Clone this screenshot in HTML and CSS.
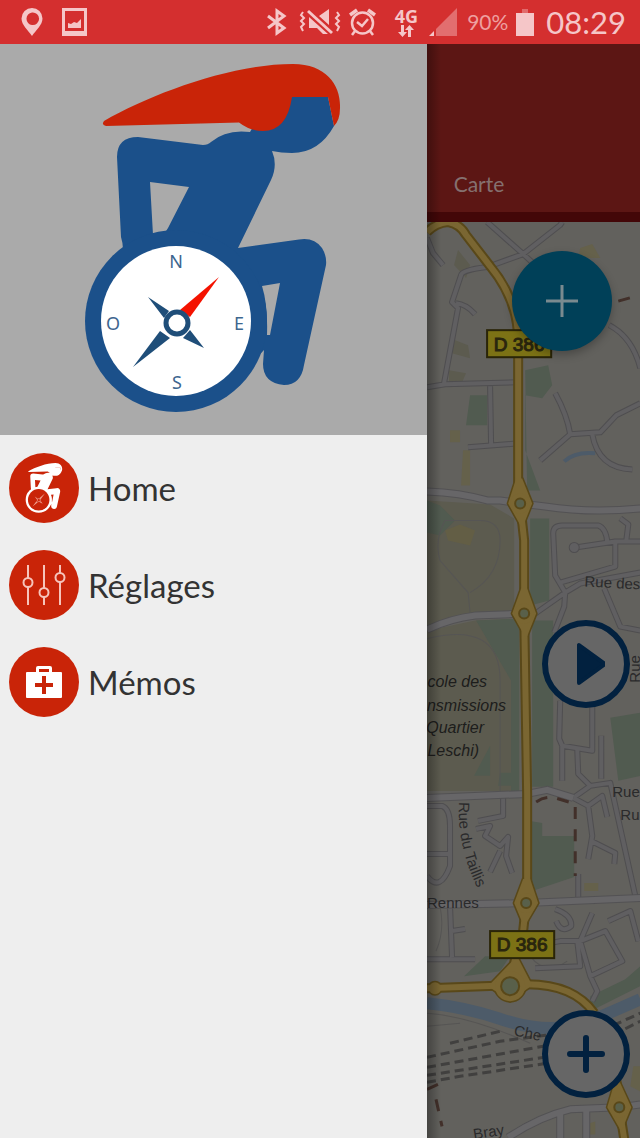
FILE: index.html
```html
<!DOCTYPE html>
<html lang="fr">
<head>
<meta charset="utf-8">
<meta name="viewport" content="width=device-width, initial-scale=1">
<title>Carte</title>
<link rel="stylesheet" href="styles.css">
</head>
<body>
<svg class="sprite" aria-hidden="true">
  <symbol id="figure" viewBox="84 64 256 349">
    <path class="fig-body" fill-rule="evenodd" d="M291 97H327L333 126Q318 153 291 153Q280 153 271 151Q277 165 270 180L237 248L298 239.500Q313 237 321 248Q326 256 325 265L303 365Q300 385 283 385Q262 383 262 364L263 350L240 375L120 260Q124 250 120 237L116 157Q116 137 137 137L202 145Q207 145 210 142Q225 129 249 132L262 110ZM149 182L152 235L162 233Q166 231 167 228L188 187ZM261 286L279 283L269 335H266Q267 305 261 286Z"/>
    <circle class="fig-body" cx="175" cy="321" r="91"/>
    <path class="fig-hat" d="M103 121C150 94 230 64 292 64C326 64 340 86 339 108Q339 120 333 126L327 97H291Q286 131 262 131Q249 131 238 122.500L105 126Q100 125 103 121Z"/>
    <circle class="fig-dial" cx="175" cy="321" r="75"/>
    <path class="fig-north" d="M218 277L189 317L179 310Z"/>
    <path class="fig-mark" d="M147 297L168 311L163 318ZM132 367L159 331L169 338ZM203 348L182 338L189 330Z"/>
    <circle class="fig-hub" cx="176" cy="323" r="11"/>
  </symbol>
</svg>

<header class="status">
  <div class="status-side">
    <svg class="icon-pin" viewBox="0 0 22 28"><path fill="currentColor" fill-rule="evenodd" d="M11 0A10.500 10.500 0 0 0 .5 10.500C.5 17 7 22 11 28C15 22 21.500 17 21.500 10.500A10.500 10.500 0 0 0 11 0ZM11 4.500A6.300 6.300 0 1 1 11 17A6.300 6.300 0 0 1 11 4.500Z"/></svg>
    <svg class="icon-image" viewBox="0 0 25 28"><path fill="currentColor" fill-rule="evenodd" d="M0 0H25V28H0ZM3 3V23H22V3Z"/><path fill="currentColor" d="M6 20V15L9 16L12 14L15 15L19 11V20Z"/></svg>
  </div>
  <div class="status-side status-system">
    <svg class="icon-bt" viewBox="0 0 20 28"><path fill="none" stroke="currentColor" stroke-width="3" d="M1 8L17 20L10 25V3L17 8L1 20"/></svg>
    <svg class="icon-mute" viewBox="0 0 42 28"><g fill="none" stroke="currentColor"><path stroke-width="2" d="M4 4L2 7L5 10L2 13L5 16L2 19L4 23M38 4L40 7L37 10L40 13L37 16L40 19L38 23"/><path stroke-width="3" d="M9 3L33 25"/></g><path fill="currentColor" d="M10 9L29 26H24L18 20H10ZM20 8L30 1V17Z"/></svg>
    <svg class="icon-alarm" viewBox="0 0 27 28"><g fill="none" stroke="currentColor" stroke-width="2.500"><circle cx="13.500" cy="15" r="10.500"/><path d="M8 14L13 18L19 11M6 23L3 27M21 23L24 27"/><path stroke-width="3.500" d="M1 7L8 2M26 7L19 2"/></g></svg>
    <div class="network"><span>4G</span>
      <svg class="icon-data" viewBox="0 0 16 12"><path fill="currentColor" d="M3 0H6V7H9L4.500 12L0 7H3ZM10 12H13V5H16L11.500 0L7 5H10Z"/></svg>
    </div>
    <svg class="icon-signal" viewBox="0 0 28 28"><path fill="currentColor" opacity=".42" d="M28 0V28H7V21Z"/><path fill="currentColor" d="M0 28L5 23V28Z"/></svg>
    <span class="battery-level">90%</span>
    <svg class="icon-battery" viewBox="0 0 18 27"><path fill="currentColor" d="M0 4H18V27H0Z"/><path fill="currentColor" opacity=".4" d="M6 0H12V4H6Z"/></svg>
    <time class="clock">08:29</time>
  </div>
</header>

<div class="screen">
  <aside class="drawer">
    <div class="hero">
      <svg class="hero-logo" viewBox="84 64 256 349" role="img" aria-label="Logo boussole">
        <use href="#figure" x="84" y="64" width="256" height="349"/>
        <g class="compass-text"><text x="175" y="268">N</text><text x="112" y="330">O</text><text x="238" y="330">E</text><text x="176" y="389">S</text></g>
      </svg>
    </div>
    <nav class="menu">
      <a class="menu-item" href="#home"><span class="badge"><svg class="badge-figure"><use href="#figure"/></svg></span>Home</a>
      <a class="menu-item" href="#reglages"><span class="badge"><svg class="badge-sliders" viewBox="0 0 44 42"><g fill="none" stroke="currentColor" stroke-width="2"><path d="M6 1V14M6 23V41M22 1V24M22 33V41M38 1V9M38 18V41"/><circle cx="6" cy="18.500" r="4.500"/><circle cx="22" cy="28.500" r="4.500"/><circle cx="38" cy="13.500" r="4.500"/></g></svg></span>Réglages</a>
      <a class="menu-item" href="#memos"><span class="badge"><svg class="badge-kit" viewBox="0 0 36 32"><path fill="currentColor" fill-rule="evenodd" d="M1 6H10V2Q10 0 12 0H24Q26 0 26 2V6H35Q36 6 36 7V31Q36 32 35 32H1Q0 32 0 31V7Q0 6 1 6ZM13 3V6H23V3ZM16 10V17H9V21H16V28H20V21H27V17H20V10Z"/></svg></span>Mémos</a>
    </nav>
  </aside>

  <main class="pane">
    <div class="toolbar"><a class="tab" href="#carte">Carte</a></div>
    <svg class="map" viewBox="427 222 213 916" preserveAspectRatio="xMinYMin slice" role="img" aria-label="Plan du quartier">
      <defs>
        <path id="lanes" d="M427 238L433 253L443 265M487 222L523 254L560 225L562 222M535 265L523 254L487 267Q462 270 461 275L452 302L458 308L444 383M456 303Q466 304 475 314M427 387L445 384L518 382M609 325Q632 337 640 368M555 393Q567 415 570 434M640 403L616 415L600 432L570 434L540 460M592 434Q598 468 632 469M490 386L491 445M468 447L518 443M565 592L555 575L553 533Q553 525 562 525H598Q606 528 607 542M575 547L615 541H640M615 541V566L560 582M565 592L580 583L640 572M535 613L565 592L564 606L554 632M604 588L620 626L640 630M620 518L628 524L626 540M560 700L559 738L562 745V780M562 745L592 750V700M577 748L578 773L590 785M601 735V778M573 797L590 785L610 782L635 895M573 797L588 805L602 795L607 816M588 805L592 835L588 858M591 840L615 852L614 863M427 805H442Q450 808 450 825V865Q440 892 427 875M427 853H450M503 797V815L478 820M476 828L490 825L485 835L500 845L508 836L506 855L512 872M500 850L490 871M578 873V897M450 905L452 956M427 958H475M452 930L465 928M533 945L560 940H580L592 912M535 967L580 965L577 940M580 940L605 930L622 960L590 975L580 940M555 908Q572 914 571 925Q561 933 556 920M590 975L597 990L592 1000M608 920L630 910L638 940"/>
        <path id="streets" d="M427 491Q460 492 487 500H500L520 503L545 506Q590 513 640 508M427 629Q450 618 475 615L524 613M427 797L527 793L547 789L573 797M427 904L526 902L640 897M508 1136Q540 1115 570 1108L619 1106L640 1103M560 1112V1138M586 1108V1138"/>
        <path id="main-road" d="M427 232Q436 223 448 222Q460 224 466 235L490 266Q518 300 518 340V480L520 503L524 540V613L527 793V887L526 902L523 930Q515 950 510 985M427 987L510 984Q570 978 594 1012M614 1060L619 1106L624 1138"/>
        <g id="rounds"><path d="M516 478H522L532 503L522 528L508 503ZM521 588H527L536 613L526 638L512 613ZM523 878H530L538 902L524 926L514 902ZM517 955L532 984L510 1000L488 985ZM614 1082H620L631 1106L621 1130L607 1106Z"/><circle cx="520" cy="503" r="10"/><circle cx="524" cy="613" r="10"/><circle cx="526" cy="902" r="10"/><circle cx="510" cy="985" r="15"/><circle cx="619" cy="1106" r="10"/><circle cx="435" cy="987" r="6"/></g>
        <path id="taillis" d="M459 801Q456 848 482 896"/>
      </defs>
      <rect class="land" x="427" y="222" width="213" height="916"/>
      <g class="park-olive">
        <path d="M427 500L490 504L514 518V610L427 625ZM427 630L475 620L519 618V790H427Z"/>
        <path d="M458 250L470 265L466 278L454 265ZM450 338L468 345L470 358L452 353ZM449 370L466 373L462 382H449Z"/>
      </g>
      <g class="park-green">
        <path d="M427 500L440 505L455 520L440 535L427 532ZM530 518H549V600L530 605ZM476 620L519 618V790H511V680ZM532 620H553V786H532ZM530 820L542 822V835H574V876L532 890ZM610 717L640 712V775L618 780ZM525 370L548 365L552 385L542 398L525 395V450L540 490H527ZM474 775L490 745V775ZM500 772H514V785H498ZM464 975L485 955L510 955L500 970ZM590 995L625 978L640 965V985L590 1010ZM470 395H487V425H466Z"/>
      </g>
      <g class="park-sand"><path d="M445 530L460 524L475 530L470 545L448 540ZM580 248L592 244L600 258H578ZM582 1124L595 1120V1133H582ZM584 882H598V890H584ZM633 1065H640V1090L630 1085ZM450 430H460V442H450ZM463 450H470V485H461Z"/></g>
      <path class="stream" d="M564 461Q575 451 595 453"/>
      <path class="river" d="M427 1002Q465 1006 498 1017Q550 1035 590 1020L640 998"/>
      <path class="trail" d="M445 520Q434 540 440 560L468 592L470 612M470 592Q500 575 500 540Q500 520 480 520H445M427 638Q500 620 500 680V790M530 955Q545 975 567 960M440 905Q445 930 436 950M427 1012Q470 1015 530 1042M427 1025L460 1022"/>
      <g class="rails"><path d="M450 1042L500 1030M427 1056L500 1040L560 1032M427 1066L565 1041M427 1074L570 1052M427 1081L460 1075L560 1060M600 1030L640 1012M600 1040L640 1020"/></g>
      <use href="#lanes" class="lane-edge"/><use href="#lanes" class="lane-fill"/>
      <circle class="court" cx="574" cy="547" r="5"/>
      <use href="#streets" class="street-edge"/><use href="#streets" class="street-fill"/>
      <use href="#main-road" class="main-edge"/>
      <use href="#rounds" class="round-edge"/>
      <use href="#main-road" class="main-fill"/>
      <use href="#rounds" class="round-fill"/>
      <g class="islet"><circle cx="520" cy="503" r="5"/><circle cx="524" cy="613" r="5"/><circle cx="526" cy="902" r="5"/><circle cx="510" cy="985" r="9"/><circle cx="619" cy="1106" r="5"/></g>
      <path class="boundary" d="M536 801Q545 795 555 797L575 803V875M618 301L632 297M427 1088L440 1082M436 1098L442 1125"/>
      <g class="plate"><rect x="487" y="330" width="64" height="27"/><text x="519" y="351">D 386</text><rect x="490" y="930" width="64" height="27"/><text x="522" y="950">D 386</text></g>
      <g class="place"><text x="487" y="686">cole des</text><text x="506" y="710">nsmissions</text><text x="484" y="732">Quartier</text><text x="479" y="755">Leschi)</text></g>
      <g class="road-name">
        <text><textPath href="#taillis">Rue du Taillis</textPath></text>
        <text x="427" y="907">Rennes</text>
        <text x="584" y="586" transform="rotate(3 584 586)">Rue des</text>
        <text x="612" y="796">Rue</text><text x="620" y="819">Ru</text>
        <text x="513" y="1034" transform="rotate(12 513 1034)">Che</text>
        <text x="474" y="1138" transform="rotate(-9 474 1138)">Bray</text>
        <text x="640" y="682" transform="rotate(-90 640 682)">Rue</text>
      </g>
    </svg>
    <button class="fab fab-add" type="button" aria-label="Ajouter"><svg viewBox="0 0 32 32"><path stroke="currentColor" stroke-width="3" d="M16 0V32M0 16H32"/></svg></button>
    <button class="fab fab-play" type="button" aria-label="Démarrer"><svg viewBox="0 0 38 44"><path fill="currentColor" stroke="currentColor" stroke-width="4" stroke-linejoin="round" d="M12 3V41L38 22Z"/></svg></button>
    <button class="fab fab-zoom" type="button" aria-label="Zoomer"><svg viewBox="0 0 38 38"><path stroke="currentColor" stroke-width="6" stroke-linecap="round" d="M19 3V35M3 19H35"/></svg></button>
  </main>
</div>
</body>
</html>
```
FILE: styles.css
```css
* { box-sizing: border-box; }
body {
  margin: 0;
  min-height: 100vh;
  display: flex;
  flex-direction: column;
  background: #eee;
  font-family: Lato, "Open Sans", sans-serif;
}
svg { display: block; flex: none; }
a { color: inherit; text-decoration: none; }
.sprite { position: absolute; width: 0; height: 0; }

/* Status bar */
.status {
  height: 44px;
  padding: 0 14px 0 21px;
  display: flex;
  align-items: center;
  justify-content: space-between;
  background: #d42f2f;
  color: #f5c6c8;
}
.status-side { display: flex; align-items: center; gap: 19px; }
.status-system { gap: 8px; }
.icon-pin { width: 22px; height: 28px; }
.icon-image { width: 25px; height: 28px; }
.icon-bt { width: 20px; height: 28px; margin-right: 4px; }
.icon-mute { width: 42px; height: 28px; }
.icon-alarm { width: 27px; height: 28px; }
.network {
  margin: 0 3px 0 11px;
  display: flex;
  flex-direction: column;
  align-items: center;
  font: 700 18px/18px "Open Sans", sans-serif;
}
.icon-data { width: 16px; height: 12px; }
.icon-signal { width: 28px; height: 28px; }
.battery-level { margin-left: 2px; font-size: 21px; line-height: 24px; color: #eea0a0; }
.icon-battery { width: 18px; height: 27px; }
.clock { margin-left: 4px; font-size: 31px; line-height: 36px; }

/* Layout */
.screen { flex: 1; display: grid; grid-template-columns: 2fr 1fr; }

/* Drawer */
.drawer { background: #eee; }
.hero { padding: 20px 20% 22px; background: #aaa; }
.hero-logo { width: 100%; height: auto; }
.fig-body { fill: var(--body, #1b508a); }
.fig-hat { fill: var(--hat, #c92408); }
.fig-dial { fill: var(--dial, #fff); }
.fig-north { fill: var(--north, #f41200); }
.fig-mark { fill: var(--mark, #1f4e79); }
.fig-hub { fill: var(--dial, #fff); stroke: var(--mark, #1f4e79); stroke-width: 5; }
.compass-text { fill: #3d668f; font: 18px "Noto Sans", sans-serif; text-anchor: middle; }
.menu { padding: 18px 9px; display: flex; flex-direction: column; gap: 27px; }
.menu-item {
  display: flex;
  align-items: center;
  gap: 9px;
  font-size: 33px;
  line-height: 40px;
  color: #333;
}
.badge {
  flex: none;
  width: 70px;
  height: 70px;
  display: grid;
  place-items: center;
  border-radius: 50%;
  background: #c92408;
  color: #fff;
}
.badge-figure {
  width: 38px;
  height: 50px;
  --body: #fff;
  --hat: #fff;
  --dial: #c92408;
  --north: #f0a090;
  --mark: #f0a090;
}
.badge-sliders { width: 44px; height: 42px; color: #f6c4bb; }
.badge-kit { width: 36px; height: 32px; }

/* Dimmed page behind the drawer */
.pane {
  position: relative;
  min-width: 0;
  display: flex;
  flex-direction: column;
  overflow: hidden;
  background: #62615d;
}
.pane::before {
  content: "";
  position: absolute;
  inset: 0 auto 0 0;
  z-index: 1;
  width: 14px;
  background: linear-gradient(90deg, rgba(0, 0, 0, .3), transparent);
}
.toolbar {
  height: 178px;
  flex: none;
  padding: 0 27px 16px;
  display: flex;
  align-items: flex-end;
  background: #5c1614;
  border-bottom: 10px solid #430708;
}
.tab { font-size: 21px; line-height: 24px; color: #85706f; }

/* Map */
.map { width: 100%; flex: 1; min-height: 0; }
.land { fill: #62615d; }
.park-olive { fill: #5c5b4f; }
.park-green { fill: #515b50; }
.park-sand { fill: #68613f; opacity: .6; }
.stream, .river { fill: none; stroke: #4d5b69; stroke-width: 4; }
.river { stroke-width: 12; }
.trail { fill: none; stroke: #565554; stroke-width: 1; }
.rails { fill: none; stroke: #41403f; stroke-width: 3; stroke-dasharray: 9 5; }
.lane-edge, .lane-fill, .street-edge, .street-fill, .main-edge, .main-fill {
  fill: none;
  stroke-linejoin: round;
}
.lane-edge { stroke: #4f4e50; stroke-width: 6; }
.lane-fill { stroke: #605f61; stroke-width: 4; }
.court { fill: #605f61; stroke: #4f4e50; }
.street-edge { stroke: #535254; stroke-width: 8; }
.street-fill { stroke: #676668; stroke-width: 6; }
.main-edge { stroke: #594819; stroke-width: 10; }
.main-fill { stroke: #7a6632; stroke-width: 6; }
.round-edge { fill: #594819; stroke: #594819; stroke-width: 3; stroke-linejoin: round; }
.round-fill { fill: #7a6632; }
.islet { fill: #59604a; stroke: #594819; stroke-width: 2; }
.boundary { fill: none; stroke: #42302a; stroke-width: 3; stroke-dasharray: 12 10; }
.plate rect { fill: #7c7215; stroke: #2a2508; stroke-width: 2; }
.plate text { fill: #2a260e; font: 19px "Liberation Sans", sans-serif; text-anchor: middle; stroke: #2a260e; stroke-width: 1; }
.place { fill: #1d1d1c; font: italic 16px "Liberation Sans", sans-serif; text-anchor: end; }
.road-name { fill: #2a2a2b; font: 15px "Liberation Sans", sans-serif; }

/* Floating buttons over the map */
.fab {
  position: absolute;
  z-index: 2;
  right: 10px;
  width: 88px;
  height: 88px;
  padding: 0;
  display: grid;
  place-items: center;
  border: 6px solid #02213f;
  border-radius: 50%;
  background: #666;
  color: #02213f;
}
.fab-add {
  top: 207px;
  right: 28px;
  width: 100px;
  height: 100px;
  border: 0;
  background: #004058;
  color: #7a8a8f;
  box-shadow: 0 4px 8px rgba(0, 0, 0, .25);
}
.fab-add svg { width: 32px; height: 32px; }
.fab-play { top: 576px; }
.fab-play svg { width: 38px; height: 44px; }
.fab-zoom { bottom: 41px; }
.fab-zoom svg { width: 38px; height: 38px; }
```
